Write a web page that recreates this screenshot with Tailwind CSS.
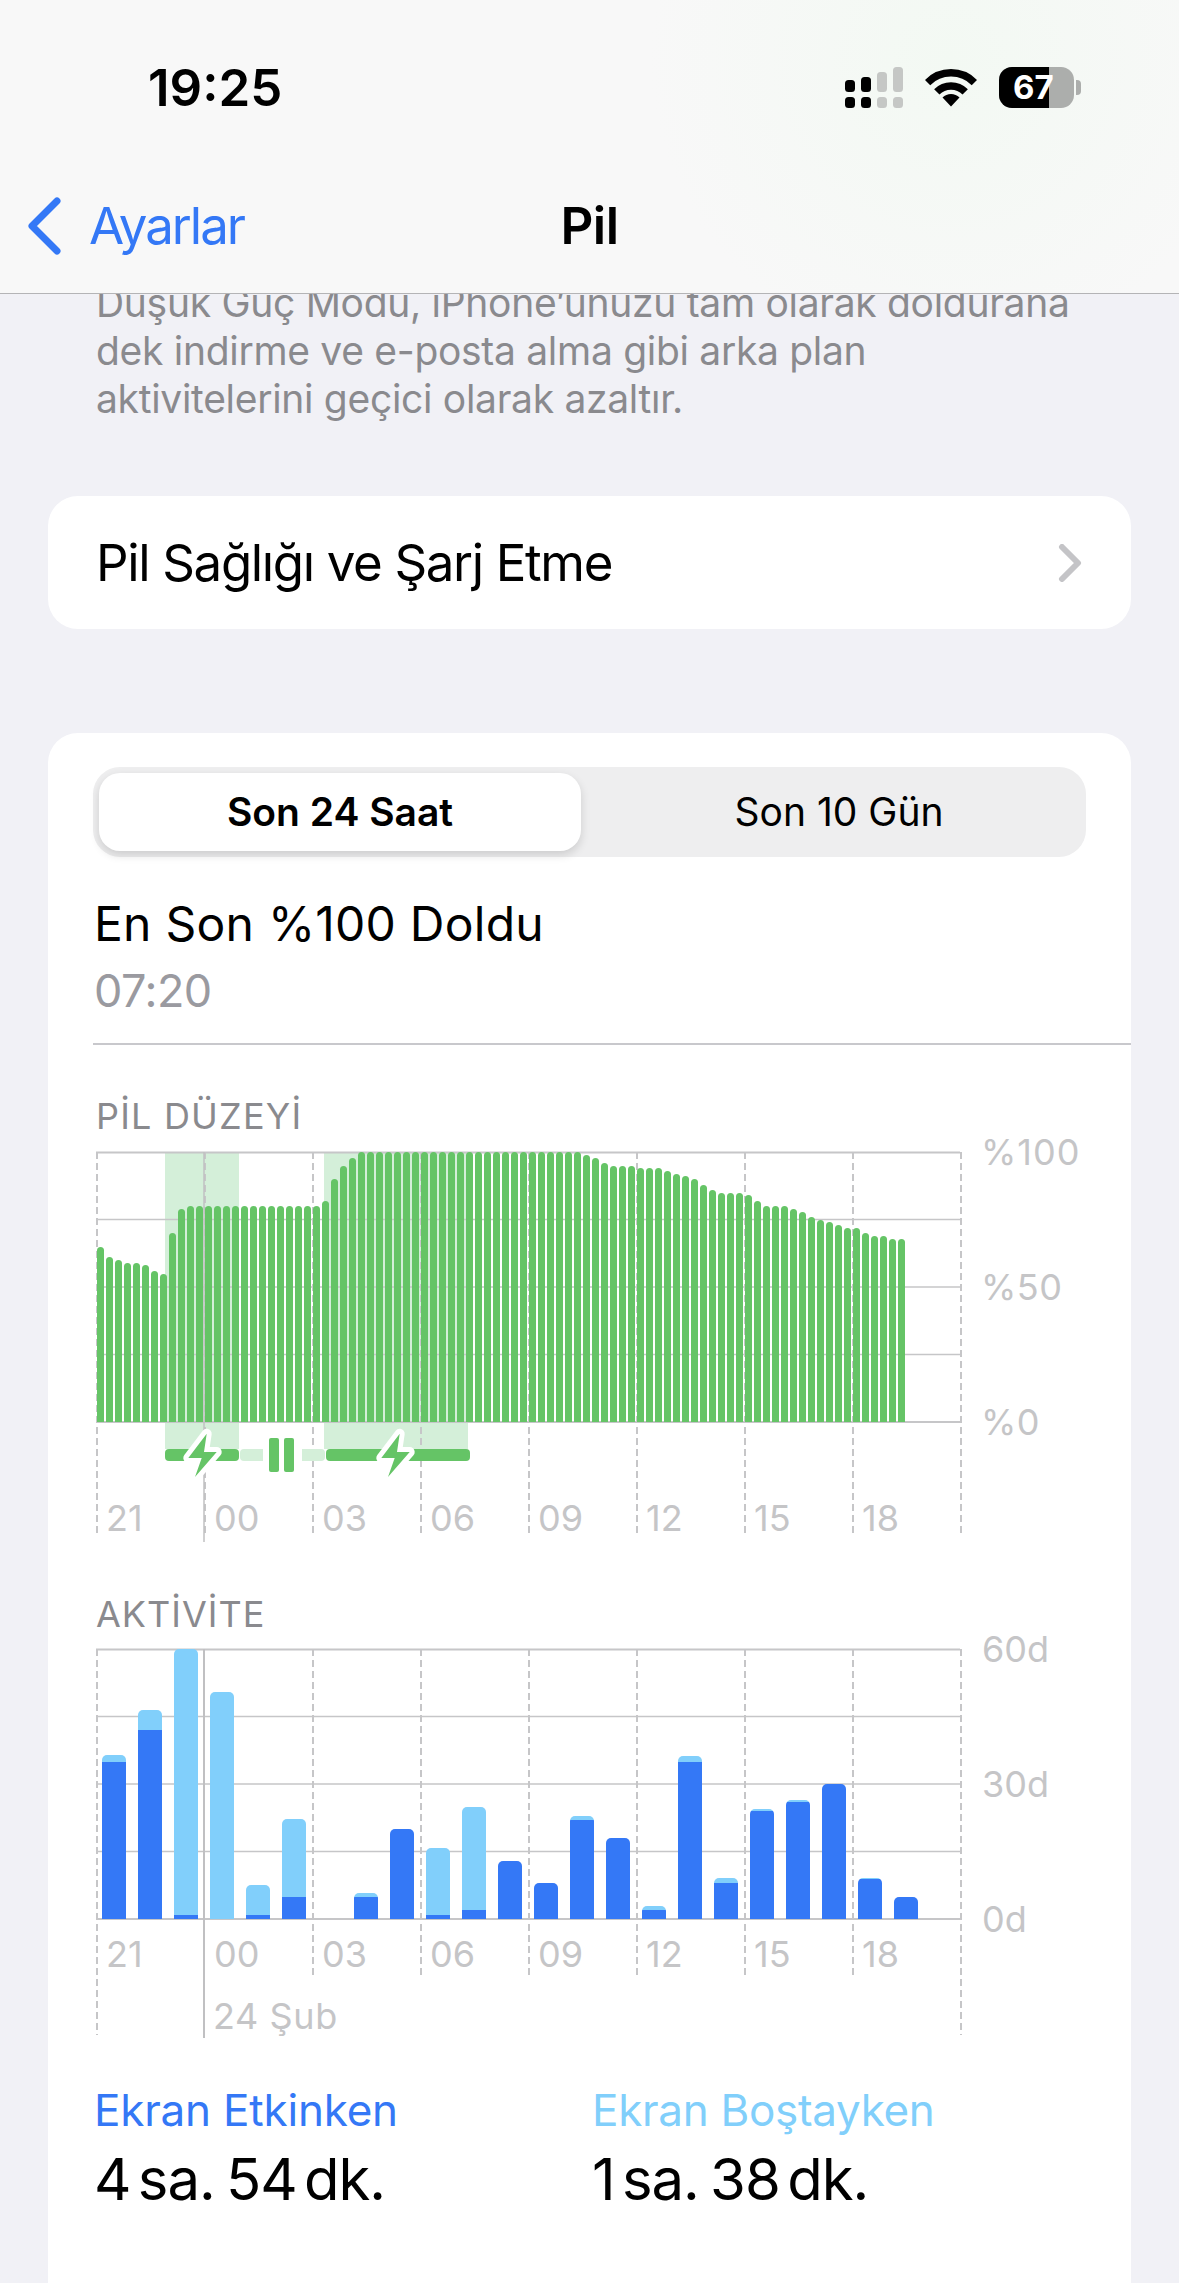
<!doctype html>
<html lang="tr">
<head>
<meta charset="utf-8">
<title>Pil</title>
<script src="https://cdn.jsdelivr.net/npm/@tailwindcss/browser@4"></script>
</head>
<body class="m-0">
<div class="flex h-[2283px] w-[1179px] flex-col overflow-hidden bg-[#f1f1f6] font-['Inter',sans-serif] text-black">

  <header class="relative z-10 h-[294px] shrink-0 border-b border-[#b4b4b6] bg-[radial-gradient(circle_at_950px_60px,#f3f9f3_0,#f8f8f8_300px)]">
    <div class="flex justify-between pt-[58px] pr-[98px] pl-[148px]">
      <div class="text-[51px] leading-[60px] font-semibold">19:25</div>
      <div class="mt-[9px] flex items-start gap-[22px]">
        <svg width="58" height="41" viewBox="0 0 58 41">
          <rect x="0" y="13" width="10" height="12" rx="3.5" fill="#000"/><rect x="16" y="10" width="10" height="15" rx="3.5" fill="#000"/>
          <rect x="32" y="5" width="10" height="20" rx="3.5" fill="#c5c7c5"/><rect x="48" y="0" width="10" height="25" rx="3.5" fill="#c5c7c5"/>
          <rect x="0" y="30" width="10" height="11" rx="3.5" fill="#000"/><rect x="16" y="30" width="10" height="11" rx="3.5" fill="#000"/>
          <rect x="32" y="30" width="10" height="11" rx="3.5" fill="#c5c7c5"/><rect x="48" y="30" width="10" height="11" rx="3.5" fill="#c5c7c5"/>
        </svg>
        <svg class="mt-[2px]" width="52" height="38" viewBox="0 0 52 38">
          <path d="M2.6 13.6 A33 33 0 0 1 49.4 13.6" fill="none" stroke="#000" stroke-width="7.5"/>
          <path d="M11.8 22.8 A20 20 0 0 1 40.2 22.8" fill="none" stroke="#000" stroke-width="7.5"/>
          <path d="M17.5 28.5 A12 12 0 0 1 34.5 28.5 L26 37.5 Z" fill="#000"/>
        </svg>
        <div class="flex items-center gap-[2px]">
          <div class="relative h-[41px] w-[75px] overflow-hidden rounded-[13px] bg-[#acaeac]">
            <div class="h-full w-[50px] bg-black"></div>
            <div class="absolute top-0 left-[14px] text-[33px] leading-[41px] font-bold text-white">67</div>
          </div>
          <div class="h-[15px] w-[5px] rounded-r-[4px] bg-[#acaeac]"></div>
        </div>
      </div>
    </div>
    <nav class="mt-[78px] grid grid-cols-[1fr_auto_1fr] items-center">
      <div class="flex items-center">
        <svg class="ml-[26px]" width="38" height="60" viewBox="0 0 38 60"><path d="M31 5 L6 30 L31 55" fill="none" stroke="#3478f6" stroke-width="7" stroke-linecap="round" stroke-linejoin="round"/></svg>
        <span class="ml-[25px] text-[51px] leading-[60px] tracking-[-2px] text-[#3478f6]">Ayarlar</span>
      </div>
      <div class="text-[51px] leading-[60px] font-semibold tracking-[-0.5px]">Pil</div>
      <div></div>
    </nav>
  </header>

  <main class="flex min-h-0 flex-1 flex-col">
    <p class="-mt-[15px] pl-[96px] text-[39px] leading-[48px] tracking-[-0.3px] text-[#8a8a8e]">Düşük Güç Modu, iPhone’unuzu tam olarak doldurana<br>dek indirme ve e-posta alma gibi arka plan<br>aktivitelerini geçici olarak azaltır.</p>

    <section class="mx-[48px] mt-[73px] flex h-[133px] items-center justify-between rounded-[30px] bg-white pr-[48px] pl-[48px]">
      <span class="text-[51px] leading-[60px] tracking-[-1.35px]">Pil Sağlığı ve Şarj Etme</span>
      <svg width="26" height="38" viewBox="0 0 26 38"><path d="M5 3 L21 19 L5 35" fill="none" stroke="#c4c4c7" stroke-width="6" stroke-linecap="round" stroke-linejoin="round"/></svg>
    </section>

    <section class="mx-[48px] mt-[104px] flex-1 rounded-t-[30px] bg-white pt-[34px]">
      <div class="mx-[45px] grid h-[90px] grid-cols-[482px_1fr] rounded-[27px] bg-[#eeeeef] p-[6px]">
        <div class="flex items-center justify-center rounded-[21px] bg-white text-[39px] font-semibold shadow-[0_4px_10px_rgba(0,0,0,0.14)]">Son 24 Saat</div>
        <div class="flex items-center justify-center pl-[17px] text-[39px]">Son 10 Gün</div>
      </div>

      <div class="mt-[38px] ml-[46px] text-[48px] leading-[58px] tracking-[0.25px]">En Son %100 Doldu</div>
      <div class="mt-[12px] ml-[46px] text-[45px] leading-[52px] tracking-[-0.5px] text-[#9a9aa0]">07:20</div>
      <div class="mt-[26px] ml-[45px] h-[1.5px] bg-[#c8c8cc]"></div>

      <div class="mt-[49px] ml-[48px] text-[36px] leading-[44px] tracking-[1.2px] text-[#8a8a8e]">PİL DÜZEYİ</div>
      <div class="relative mt-[14px] ml-[48px] w-[864px] text-[36px] leading-[44px] text-[#c5c5c7]">
        <svg class="absolute top-0 left-0 overflow-visible" width="866" height="390" viewBox="0 0 866 390">
          <rect x="69" y="0" width="74" height="297" fill="#d4efd9"/><rect x="228" y="0" width="144" height="297" fill="#d4efd9"/>
          <g stroke="#c6c6c8" stroke-width="1.5" fill="none">
            <path d="M0 0.5H864" stroke-width="2"/><path d="M0 67.5H864M0 135H864M0 202.5H864"/><path d="M0 270H864" stroke-width="2"/>
            <path stroke-dasharray="7 4" stroke-width="2" d="M1 0V385M109 0V385M217 0V385M325 0V385M433 0V385M541 0V385M649 0V385M757 0V385M865 0V385"/>
          </g>
          <path d="M108 0V390" stroke="#c0c0c2" stroke-width="1.5"/>
        </svg>
        <div class="relative flex h-[270px] items-end gap-[2px] pl-[1px] *:w-[7px] *:rounded-t-[4px] *:bg-[#65c466]">
          <div style="height:175px"></div><div style="height:165px"></div><div style="height:162px"></div><div style="height:159px"></div><div style="height:159px"></div><div style="height:157px"></div><div style="height:151px"></div><div style="height:148px"></div><div style="height:189px"></div><div style="height:213px"></div>
          <div style="height:216px"></div><div style="height:216px"></div><div style="height:216px"></div><div style="height:216px"></div><div style="height:216px"></div><div style="height:216px"></div><div style="height:216px"></div><div style="height:216px"></div><div style="height:216px"></div><div style="height:216px"></div>
          <div style="height:216px"></div><div style="height:216px"></div><div style="height:216px"></div><div style="height:216px"></div><div style="height:216px"></div><div style="height:221px"></div><div style="height:243px"></div><div style="height:256px"></div><div style="height:264px"></div><div style="height:270px"></div>
          <div style="height:270px"></div><div style="height:270px"></div><div style="height:270px"></div><div style="height:270px"></div><div style="height:270px"></div><div style="height:270px"></div><div style="height:270px"></div><div style="height:270px"></div><div style="height:270px"></div><div style="height:270px"></div>
          <div style="height:270px"></div><div style="height:270px"></div><div style="height:270px"></div><div style="height:270px"></div><div style="height:270px"></div><div style="height:270px"></div><div style="height:270px"></div><div style="height:270px"></div><div style="height:270px"></div><div style="height:270px"></div>
          <div style="height:270px"></div><div style="height:270px"></div><div style="height:270px"></div><div style="height:270px"></div><div style="height:267px"></div><div style="height:264px"></div><div style="height:259px"></div><div style="height:256px"></div><div style="height:256px"></div><div style="height:256px"></div>
          <div style="height:254px"></div><div style="height:254px"></div><div style="height:254px"></div><div style="height:251px"></div><div style="height:248px"></div><div style="height:246px"></div><div style="height:243px"></div><div style="height:237px"></div><div style="height:232px"></div><div style="height:229px"></div>
          <div style="height:229px"></div><div style="height:229px"></div><div style="height:227px"></div><div style="height:221px"></div><div style="height:216px"></div><div style="height:216px"></div><div style="height:216px"></div><div style="height:213px"></div><div style="height:210px"></div><div style="height:205px"></div>
          <div style="height:202px"></div><div style="height:200px"></div><div style="height:197px"></div><div style="height:194px"></div><div style="height:194px"></div><div style="height:189px"></div><div style="height:186px"></div><div style="height:186px"></div><div style="height:183px"></div><div style="height:183px"></div>
        </div>
        <div class="absolute top-[-22px] left-[885px] tracking-[1px]">%100</div>
        <div class="absolute top-[113px] left-[885px] tracking-[0.5px]">%50</div>
        <div class="absolute top-[248px] left-[885px] tracking-[0.5px]">%0</div>

        <div class="relative mt-[27px] ml-[69px] flex h-[12px] items-stretch gap-[1px]">
          <div class="w-[74px] rounded-[4px] bg-[#65c466]"></div>
          <div class="w-[23px] rounded-l-[4px] bg-[#d4efd9]"></div>
          <div class="w-[37px]"></div>
          <div class="w-[23px] rounded-r-[4px] bg-[#d4efd9]"></div>
          <div class="w-[144px] rounded-[4px] bg-[#65c466]"></div>
          <div class="absolute -top-[11px] left-[104px] flex gap-[5px] *:h-[34px] *:w-[10px] *:rounded-[2px] *:bg-[#65c466]"><div></div><div></div></div>
          <svg class="absolute -top-[22px] left-[15px]" width="58" height="56" viewBox="0 0 58 56"><path d="M26.7 6.7 L8.3 31 L21.7 31 L15 50 L36.7 25 L24 25 Z" fill="#65c466" stroke="#fff" stroke-width="10" stroke-linejoin="round" paint-order="stroke"/></svg>
          <svg class="absolute -top-[22px] left-[208px]" width="58" height="56" viewBox="0 0 58 56"><path d="M26.7 6.7 L8.3 31 L21.7 31 L15 50 L36.7 25 L24 25 Z" fill="#65c466" stroke="#fff" stroke-width="10" stroke-linejoin="round" paint-order="stroke"/></svg>
        </div>
        <div class="relative mt-[35px] flex *:w-[108px] *:pl-[10px]">
          <div>21</div><div>00</div><div>03</div><div>06</div><div>09</div><div>12</div><div>15</div><div>18</div>
        </div>
      </div>

      <div class="mt-[52px] ml-[48px] text-[36px] leading-[44px] tracking-[1px] text-[#8a8a8e]">AKTİVİTE</div>
      <div class="relative mt-[13px] ml-[48px] w-[864px] text-[36px] leading-[44px] text-[#c5c5c7]">
        <svg class="absolute top-0 left-0 overflow-visible" width="866" height="390" viewBox="0 0 866 390">
          <g stroke="#c6c6c8" stroke-width="1.5" fill="none">
            <path d="M0 0.5H864" stroke-width="2"/><path d="M0 67.5H864M0 135H864M0 202.5H864"/><path d="M0 270H864" stroke-width="2"/>
            <path stroke-dasharray="7 4" stroke-width="2" d="M1 0V386M865 0V386M217 0V326M325 0V326M433 0V326M541 0V326M649 0V326M757 0V326"/>
          </g>
          <path d="M108 0V389" stroke="#c0c0c2" stroke-width="2"/>
        </svg>
        <div class="relative flex h-[270px] items-end gap-[12px] pl-[6px] *:flex *:w-[24px] *:flex-col *:overflow-hidden *:rounded-t-[5px]">
          <div><div class="bg-[#81cffb]" style="height:7px"></div><div class="bg-[#3478f6]" style="height:157px"></div></div>
          <div><div class="bg-[#81cffb]" style="height:20px"></div><div class="bg-[#3478f6]" style="height:189px"></div></div>
          <div><div class="bg-[#81cffb]" style="height:266px"></div><div class="bg-[#3478f6]" style="height:4px"></div></div>
          <div><div class="bg-[#81cffb]" style="height:227px"></div></div>
          <div><div class="bg-[#81cffb]" style="height:30px"></div><div class="bg-[#3478f6]" style="height:4px"></div></div>
          <div><div class="bg-[#81cffb]" style="height:78px"></div><div class="bg-[#3478f6]" style="height:22px"></div></div>
          <div></div>
          <div><div class="bg-[#81cffb]" style="height:4px"></div><div class="bg-[#3478f6]" style="height:22px"></div></div>
          <div><div class="bg-[#3478f6]" style="height:90px"></div></div>
          <div><div class="bg-[#81cffb]" style="height:67px"></div><div class="bg-[#3478f6]" style="height:4px"></div></div>
          <div><div class="bg-[#81cffb]" style="height:103px"></div><div class="bg-[#3478f6]" style="height:9px"></div></div>
          <div><div class="bg-[#3478f6]" style="height:58px"></div></div>
          <div><div class="bg-[#3478f6]" style="height:36px"></div></div>
          <div><div class="bg-[#81cffb]" style="height:4px"></div><div class="bg-[#3478f6]" style="height:99px"></div></div>
          <div><div class="bg-[#3478f6]" style="height:81px"></div></div>
          <div><div class="bg-[#81cffb]" style="height:4px"></div><div class="bg-[#3478f6]" style="height:9px"></div></div>
          <div><div class="bg-[#81cffb]" style="height:6px"></div><div class="bg-[#3478f6]" style="height:157px"></div></div>
          <div><div class="bg-[#81cffb]" style="height:5px"></div><div class="bg-[#3478f6]" style="height:36px"></div></div>
          <div><div class="bg-[#81cffb]" style="height:2px"></div><div class="bg-[#3478f6]" style="height:108px"></div></div>
          <div><div class="bg-[#81cffb]" style="height:2px"></div><div class="bg-[#3478f6]" style="height:117px"></div></div>
          <div><div class="bg-[#3478f6]" style="height:135px"></div></div>
          <div><div class="bg-[#81cffb]" style="height:1px"></div><div class="bg-[#3478f6]" style="height:40px"></div></div>
          <div><div class="bg-[#3478f6]" style="height:22px"></div></div>
        </div>
        <div class="absolute top-[-22px] left-[886px]">60d</div>
        <div class="absolute top-[113px] left-[886px]">30d</div>
        <div class="absolute top-[248px] left-[886px]">0d</div>
        <div class="relative mt-[13px] flex *:w-[108px] *:pl-[10px]">
          <div>21</div><div>00</div><div>03</div><div>06</div><div>09</div><div>12</div><div>15</div><div>18</div>
        </div>
        <div class="relative mt-[18px] ml-[117px] tracking-[0.6px]">24 Şub</div>
      </div>

      <div class="mt-[46px] ml-[46px] grid grid-cols-[498px_1fr]">
        <div>
          <div class="text-[44px] leading-[52px] tracking-[-0.2px] text-[#3478f6]">Ekran Etkinken</div>
          <div class="mt-[9px] text-[58px] leading-[68px] tracking-[-1px] [word-spacing:-8px]">4 sa. <span class="ml-[4px]">54 dk.</span></div>
        </div>
        <div>
          <div class="text-[44px] leading-[52px] tracking-[-0.3px] text-[#81cffb]">Ekran Boştayken</div>
          <div class="mt-[9px] text-[58px] leading-[68px] tracking-[-1px] [word-spacing:-8px]">1 sa. <span class="ml-[4px]">38 dk.</span></div>
        </div>
      </div>
    </section>
  </main>
</div>
</body>
</html>
